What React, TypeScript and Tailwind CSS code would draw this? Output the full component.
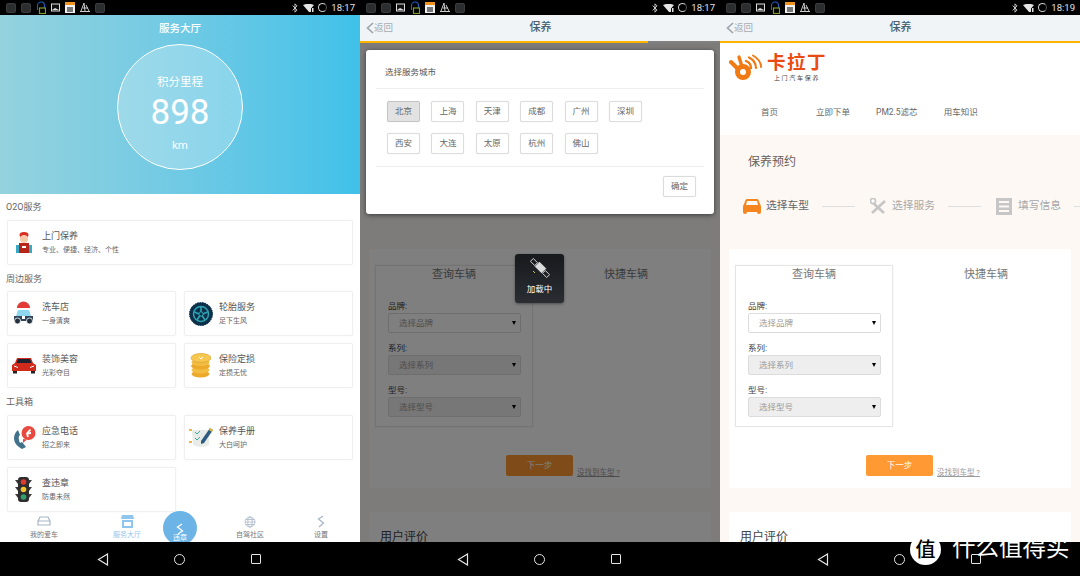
import type { ReactNode } from "react";
import { Bluetooth } from "lucide-react";

const GridApp = () => (
  <div className="w-[10px] h-[10px] rounded-[2px] bg-[#2b2d2f] border border-[#3a3c3e]" />
);

const ImageIcon = () => (
  <svg width="9" height="9" viewBox="0 0 9 9">
    <rect x="0.5" y="1" width="8" height="7" fill="#111" stroke="#ddd" />
    <path d="M1 7 L4 5 L8 7 Z" fill="#ddd" />
  </svg>
);

const LockIcon = () => (
  <svg width="10" height="13" viewBox="0 0 10 13" fill="none">
    <path d="M1.5 9 V4.5 a3.5 3.5 0 0 1 7 0 V7" stroke="#1d5fc0" strokeWidth="1.1" />
    <rect x="3.5" y="7" width="6" height="5.5" stroke="#7f9a2a" strokeWidth="1.2" />
  </svg>
);

const CalendarIcon = () => (
  <div className="w-[10px] h-[11px] bg-[#f0f0f0] border-t-[3px] border-[#f0931e] flex items-center justify-center">
    <div className="w-[6px] h-[5px] bg-[#777]" />
  </div>
);

const BoatIcon = () => (
  <svg width="10" height="11" viewBox="0 0 10 11" fill="none" stroke="#ccc" strokeWidth="1">
    <path d="M1 9 L4 1 L5 9 M6 3 L9 9 M0 9.5 H10 M3 6 H8" />
  </svg>
);

const StatusBar = ({ time, lockFirst }: { time: string; lockFirst?: boolean }) => (
  <div className="h-[15px] shrink-0 bg-black flex items-center justify-between pl-[6px] pr-[5px]">
    <div className="flex items-center gap-[5px]">
      <GridApp />
      <GridApp />
      {lockFirst ? <LockIcon /> : <ImageIcon />}
      {lockFirst ? <ImageIcon /> : <LockIcon />}
      <CalendarIcon />
      <BoatIcon />
      <GridApp />
    </div>
    <div className="flex items-center text-[#e4e4e4]">
      <Bluetooth size={10} strokeWidth={2} className="mr-[3px]" />
      <svg width="11" height="8" viewBox="0 0 11 8" className="mr-[4px]">
        <path d="M0 1 Q5.5 -1.5 11 1 L8 4.5 V8 H6 Z" fill="#e4e4e4" />
        <rect x="9" y="4" width="1.5" height="4" fill="#e4e4e4" />
      </svg>
      <div className="w-[9px] h-[9px] rounded-full border border-[#cfcfcf] border-r-[#555] mr-[4px]" />
      <span className="text-[9.5px] leading-none">{time}</span>
    </div>
  </div>
);

const NavBar = () => (
  <div className="h-[34px] shrink-0 bg-black flex items-center gap-[65px] pl-[97px]">
    <svg width="12" height="13" viewBox="0 0 12 13" fill="none" stroke="#e6e6e6" strokeWidth="1.2">
      <path d="M10.5 1 L1.5 6.5 L10.5 12 Z" />
    </svg>
    <div className="w-[11px] h-[11px] rounded-full border border-[#e6e6e6]" />
    <div className="w-[10px] h-[10px] border-[1.5px] border-[#e6e6e6] rounded-[1px] ml-px" />
  </div>
);

const Mechanic = () => (
  <svg width="18" height="24" viewBox="0 0 18 24">
    <ellipse cx="9" cy="4" rx="4.5" ry="3" fill="#d92d20" />
    <circle cx="9" cy="8" r="4" fill="#f5c8a8" />
    <path d="M1 14 H17 V22 H1 Z" fill="#38a9c4" />
    <path d="M4 12 H14 V22 H4 Z" fill="#b8231a" />
    <rect x="7" y="15" width="4" height="2" fill="#fff" />
  </svg>
);

const WashCar = () => (
  <svg width="21" height="25" viewBox="0 0 21 25">
    <path d="M4 7 a6.5 6.5 0 0 1 13 0 Z" fill="#e03b36" />
    <path d="M5 9 H16 L18 15 H3 Z" fill="#8fd6ef" />
    <path d="M1 15 H20 V20 H1 Z" fill="#33475b" />
    <circle cx="4.5" cy="20" r="3" fill="#22303f" stroke="#fff" strokeWidth="0.8" />
    <circle cx="16.5" cy="20" r="3" fill="#22303f" stroke="#fff" strokeWidth="0.8" />
    <rect x="9" y="15" width="3" height="3" fill="#fff" />
  </svg>
);

const Tire = () => (
  <svg width="24" height="24" viewBox="0 0 24 24">
    <circle cx="12" cy="12" r="11.5" fill="#0c2f4a" stroke="#0c2f4a" strokeDasharray="1.5 1" />
    <circle cx="12" cy="12" r="7.5" fill="none" stroke="#2fa5b3" strokeWidth="1.5" />
    <path d="M12 5 V10 M5.5 10 L10 12 M8 18 L11 13.5 M16 18 L13 13.5 M18.5 10 L14 12" stroke="#2fa5b3" strokeWidth="1.6" />
    <circle cx="12" cy="12" r="2.2" fill="none" stroke="#2fa5b3" />
  </svg>
);

const SportsCar = () => (
  <svg width="24" height="17" viewBox="0 0 24 17">
    <path d="M5 1 H19 L21 6 L24 8 V14 H0 V8 L3 6 Z" fill="#d02a1c" />
    <path d="M6 2 H18 L19.5 6 H4.5 Z" fill="#1d2230" />
    <rect x="1" y="14" width="4" height="2.5" fill="#222" />
    <rect x="19" y="14" width="4" height="2.5" fill="#222" />
    <path d="M2 9 L6 10.5 M22 9 L18 10.5" stroke="#fff" strokeWidth="1" />
  </svg>
);

const Coins = () => (
  <svg width="21" height="25" viewBox="0 0 21 25">
    <ellipse cx="10.5" cy="21" rx="9" ry="3.5" fill="#eda92a" />
    <ellipse cx="10.5" cy="17" rx="9" ry="3.5" fill="#f2bd42" />
    <ellipse cx="10.5" cy="13" rx="9.5" ry="3.5" fill="#eda92a" />
    <ellipse cx="10.5" cy="9.5" rx="9" ry="3.5" fill="#f2bd42" />
    <ellipse cx="11" cy="5" rx="10" ry="4.5" fill="#f6c84f" stroke="#dd9a20" strokeWidth="0.6" />
    <path d="M9 4 L11 6 L13 4" stroke="#fff" fill="none" />
  </svg>
);

const Phone = () => (
  <svg width="24" height="24" viewBox="0 0 24 24">
    <path d="M4 6 C0 12 2 19 10 23 L14 21 L10 16 L8 17 C6.5 14 6.5 11.5 7 10 L8 9 L6 4 Z" fill="#41728a" />
    <circle cx="16.5" cy="7" r="7" fill="#e84a3f" />
    <path d="M11 13 L11 17 L15 13.5 Z" fill="#e84a3f" />
    <path d="M18.5 3.5 L15 7.5 L16 11 M15 7.5 L19 7" stroke="#fff" strokeWidth="1.8" fill="none" />
  </svg>
);

const Manual = () => (
  <svg width="24" height="22" viewBox="0 0 24 22">
    <path d="M3 3 H20 V18 Q12 22 4 18 Z" fill="#e7ece8" />
    <path d="M0 3 H3 M0 15 H3" stroke="#e8b93c" strokeWidth="2" />
    <path d="M6 5 L8 7 L11 4 M6 11 L8 13 L11 10" stroke="#3aa9a0" fill="none" />
    <path d="M12 14 L21 1 L24 3 L15 16 L12 17 Z" fill="#2d5b82" />
    <path d="M21 1 L24 3 L23 5 L20 3 Z" fill="#e8b93c" />
  </svg>
);

const TrafficLight = () => (
  <svg width="17" height="25" viewBox="0 0 17 25">
    <path d="M0 3 H17 L14 7 H3 Z M0 10 H17 L14 14 H3 Z M0 17 H17 L14 21 H3 Z" fill="#3a3a3c" />
    <rect x="3" y="0" width="11" height="25" rx="3" fill="#2e2e30" />
    <circle cx="8.5" cy="5" r="2.8" fill="#e0392f" />
    <circle cx="8.5" cy="12.5" r="2.8" fill="#f4c531" />
    <circle cx="8.5" cy="20" r="2.8" fill="#2fa36a" />
  </svg>
);

const ServiceCard = ({ icon, title, desc, wide }: { icon: ReactNode; title: string; desc: string; wide?: boolean }) => (
  <div className={`${wide ? "mx-[7px]" : ""} h-[45px] bg-white border border-[#f0f0f0] rounded-[2px] shadow-[0_0_2px_rgba(0,0,0,0.06)] flex items-center`}>
    <div className="w-[31px] shrink-0 flex items-center justify-center">{icon}</div>
    <div className="ml-[3px]">
      <div className="text-[9px] leading-[13px] text-[#555]">{title}</div>
      <div className="text-[7px] leading-[10px] mt-[2px] text-[#666]">{desc}</div>
    </div>
  </div>
);

const SectionTitle = ({ children, className }: { children: ReactNode; className: string }) => (
  <div className={`px-[6px] text-[9px] leading-[14px] text-[#666] ${className}`}>{children}</div>
);

const TabItem = ({ icon, label, active, className }: { icon: ReactNode; label: string; active?: boolean; className: string }) => (
  <div className={`flex flex-col items-center ${className}`}>
    <div className="h-[15px] flex items-center justify-center">{icon}</div>
    <div className={`text-[7px] leading-[11px] mt-[1px] whitespace-nowrap ${active ? "text-[#8fc6ee]" : "text-[#777]"}`}>{label}</div>
  </div>
);

const ServiceHall = () => (
  <div className="flex-1 min-h-0 flex flex-col bg-white relative overflow-hidden">
    {/* top banner */}
    <div className="h-[179px] shrink-0 bg-gradient-to-r from-[#94d2de] to-[#3fc1e9] flex flex-col items-center text-white">
      <div className="text-[10.5px] leading-[14px] mt-[7px] font-medium">服务大厅</div>
      <div className="w-[126px] h-[126px] rounded-full border border-white bg-white/25 flex flex-col items-center mt-[8px]">
        <div className="text-[11.5px] leading-[16px] mt-[29px]">积分里程</div>
        <div className="text-[35px] leading-[40px] mt-[3px] font-['Roboto',sans-serif]">898</div>
        <div className="text-[11.5px] leading-[14px] mt-[5px]">km</div>
      </div>
    </div>

    <SectionTitle className="mt-[6px]">O2O服务</SectionTitle>
    <div className="mt-[6px]">
      <ServiceCard wide icon={<Mechanic />} title="上门保养" desc="专业、便捷、经济、个性" />
    </div>
    <SectionTitle className="mt-[7px]">周边服务</SectionTitle>
    <div className="grid grid-cols-2 gap-x-[8px] gap-y-[7px] px-[7px] mt-[5px]">
      <ServiceCard icon={<WashCar />} title="洗车店" desc="一身清爽" />
      <ServiceCard icon={<Tire />} title="轮胎服务" desc="足下生风" />
      <ServiceCard icon={<SportsCar />} title="装饰美容" desc="光彩夺目" />
      <ServiceCard icon={<Coins />} title="保险定损" desc="定损无忧" />
    </div>
    <SectionTitle className="mt-[7px]">工具箱</SectionTitle>
    <div className="grid grid-cols-2 gap-x-[8px] gap-y-[7px] px-[7px] mt-[6px]">
      <ServiceCard icon={<Phone />} title="应急电话" desc="招之即来" />
      <ServiceCard icon={<Manual />} title="保养手册" desc="大白呵护" />
      <ServiceCard icon={<TrafficLight />} title="查违章" desc="防患未然" />
    </div>

    {/* bottom tabs */}
    <div className="flex h-[29px] pt-[2px]">
      <TabItem
        className="w-[88px]"
        label="我的爱车"
        icon={
          <svg width="14" height="11" viewBox="0 0 14 11" fill="none" stroke="#a8b6c9" strokeWidth="1.2">
            <path d="M3 1 H11 L13 5 V9 H1 V5 Z M1 5 H13" />
          </svg>
        }
      />
      <TabItem
        className="w-[78px]"
        active
        label="服务大厅"
        icon={
          <svg width="13" height="13" viewBox="0 0 13 13" fill="#8fc6ee">
            <path d="M1 0 H12 L13 4 H0 Z" />
            <path d="M1 5 H12 V13 H1 Z M3 7 V11 H10 V7 Z" fillRule="evenodd" />
          </svg>
        }
      />
      <div className="w-[46px]" />
      <TabItem
        className="w-[76px]"
        label="自驾社区"
        icon={
          <svg width="12" height="12" viewBox="0 0 12 12" fill="none" stroke="#a8b6c9" strokeWidth="0.8">
            <circle cx="6" cy="6" r="5" />
            <ellipse cx="6" cy="6" rx="2.2" ry="5" />
            <path d="M1 6 H11 M1.8 3.5 H10.2 M1.8 8.5 H10.2" />
          </svg>
        }
      />
      <TabItem
        className="w-[66px]"
        label="设置"
        icon={
          <svg width="8" height="13" viewBox="0 0 8 13" fill="none" stroke="#a8b6c9" strokeWidth="1.3">
            <path d="M6 1 L1.5 4 L6.5 8 L2 12" />
          </svg>
        }
      />
    </div>

    {/* round button sits over the tab bar */}
    <div className="absolute left-[163px] top-[496px] w-[34px] h-[34px] rounded-full bg-[#6cb3e6] flex flex-col items-center text-white">
      <svg width="8" height="12" viewBox="0 0 8 12" fill="none" stroke="#fff" strokeWidth="1.3" className="mt-[12px]">
        <path d="M6 1 L1.5 4 L6.5 8 L2 11" />
      </svg>
      <div className="text-[7px] leading-[9px] -mt-[1px]">违章</div>
    </div>
  </div>
);

const Header = ({ progress }: { progress: boolean }) => (
  <div className="shrink-0">
    <div className="h-[26px] bg-[#f0f4f7] flex items-center">
      <svg width="8" height="12" viewBox="0 0 8 12" fill="none" stroke="#9aa3ab" strokeWidth="1.6" className="ml-[6px]">
        <path d="M7 1 L1.5 6 L7 11" />
      </svg>
      <span className="text-[9.5px] text-[#a6acb2]">返回</span>
      <span className="flex-1 text-center text-[11px] font-medium text-[#46606f] pr-[32px]">保养</span>
    </div>
    <div className={`h-[2px] ${progress ? "bg-[#808080]" : "bg-white"}`}>
      <div className={`h-[2px] bg-[#ffb400] ${progress ? "w-[288px]" : "w-full"}`} />
    </div>
  </div>
);

const Step = ({ icon, label, active }: { icon: ReactNode; label: string; active?: boolean }) => (
  <div className="flex items-center shrink-0">
    <div className="w-[18px] flex justify-center">{icon}</div>
    <span className={`ml-[5px] text-[10.75px] ${active ? "text-[#666]" : "text-[#a8a8a8]"}`}>{label}</span>
  </div>
);

const StepLine = () => <div className="w-[33px] h-px bg-[#dedede] shrink-0 ml-[13px] mr-[14px]" />;

const CarSelect = ({ label, placeholder, disabled, className }: { label: string; placeholder: string; disabled?: boolean; className: string }) => (
  <div className={className}>
    <div className="text-[8.5px] leading-[10px] text-[#444]">{label}</div>
    <div className={`mt-[2px] h-[20px] w-[133px] rounded-[2px] border border-[#dcdcdc] flex items-center justify-between pl-[10px] pr-[4px] ${disabled ? "bg-[#eeeeee]" : "bg-white"}`}>
      <span className="text-[8.5px] text-[#9a9a9a]">{placeholder}</span>
      <span className="w-0 h-0 border-x-[2px] border-x-transparent border-t-[4px] border-t-black" />
    </div>
  </div>
);

const KarLogo = () => (
  <div className="flex items-start">
    <svg width="33" height="27" viewBox="0 0 33 27" fill="none" stroke="#f07a13" strokeLinecap="round">
      <circle cx="14" cy="18" r="5.5" strokeWidth="5" />
      <path d="M2 8 L9 15" strokeWidth="4" />
      <path d="M10 3 L12.5 11" strokeWidth="3.4" />
      <path d="M17 7 Q22 9 22 14" strokeWidth="2.4" />
      <path d="M20 3.5 Q27 7 27 14" strokeWidth="2.2" />
      <path d="M24 1.5 Q32 6 32 13" strokeWidth="2" />
    </svg>
    <div className="ml-[5px] flex flex-col items-center">
      <div className="text-[18.5px] leading-[19px] font-bold tracking-[1.5px] text-[#ea4b12]">卡拉丁</div>
      <div className="text-[6px] leading-[8px] mt-[1px] tracking-[1.7px] text-[#444]">上门汽车保养</div>
    </div>
  </div>
);

// covered: the top of the page lies behind the city dialog, so its texts are not drawn
const BookingPage = ({ covered }: { covered?: boolean }) => (
  <div className="h-[500px] overflow-hidden bg-[#fdf8f4]">
    <div className={`h-[92px] bg-white ${covered ? "invisible" : ""}`}>
      <div className="pt-[11px] pl-[9px] h-[54px]">
        <KarLogo />
      </div>
      <div className="flex text-[8.5px] text-[#666] leading-[12px] mt-[9px]">
        <span className="ml-[41px]">首页</span>
        <span className="ml-[38px]">立即下单</span>
        <span className="ml-[26px]">PM2.5滤芯</span>
        <span className="ml-[26px]">用车知识</span>
      </div>
    </div>
    <div className={`pl-[28px] pt-[18px] text-[12px] leading-[18px] text-[#6b5f58] ${covered ? "invisible" : ""}`}>保养预约</div>
    <div className={`flex items-center pl-[23px] mt-[26px] h-[18px] overflow-hidden ${covered ? "invisible" : ""}`}>
      <Step
        active
        label="选择车型"
        icon={
          <svg width="18" height="15" viewBox="0 0 18 15" fill="#f5861f">
            <path d="M4 0 H14 Q15 0 15.5 1 L17 5 Q18 6 18 8 V13 Q18 15 16 15 Q14 15 14 13 H4 Q4 15 2 15 Q0 15 0 13 V8 Q0 6 1 5 L2.5 1 Q3 0 4 0 Z M4 2 L3 6 H15 L14 2 Z" fillRule="evenodd" />
          </svg>
        }
      />
      <StepLine />
      <Step
        label="选择服务"
        icon={
          <svg width="17" height="17" viewBox="0 0 17 17" fill="none" stroke="#c6c6c6">
            <path d="M2 15 L15 3 M1 3 L14 15" strokeWidth="2.6" />
            <circle cx="3" cy="3" r="2.5" fill="#fff" strokeWidth="1.6" />
          </svg>
        }
      />
      <StepLine />
      <Step
        label="填写信息"
        icon={
          <svg width="16" height="17" viewBox="0 0 16 17">
            <path d="M0 0 H16 V17 H0 Z M3 3 V5 H13 V3 Z M3 7.5 V9.5 H13 V7.5 Z M3 12 V14 H13 V12 Z" fill="#c6c6c6" fillRule="evenodd" />
          </svg>
        }
      />
      <StepLine />
    </div>

    <div className="mx-[9px] mt-[34px] h-[239px] bg-white pt-[16px] pl-[6px]">
      <div className="flex items-start">
        <div className="w-[158px] h-[162px] border border-[#e6e6e6] shadow-[0_0_1px_rgba(0,0,0,0.1)] pl-[12px]">
          <div className="text-[11px] leading-[16px] mt-px text-[#777] text-center pr-[12px]">查询车辆</div>
          <CarSelect className="mt-[18px]" label="品牌:" placeholder="选择品牌" />
          <CarSelect className="mt-[10px]" label="系列:" placeholder="选择系列" disabled />
          <CarSelect className="mt-[10px]" label="型号:" placeholder="选择型号" disabled />
        </div>
        <div className="flex-1 text-center text-[11px] leading-[16px] text-[#777] pl-[8px] pt-[2px]">快捷车辆</div>
      </div>
      <div className="flex items-end mt-[28px] pl-[131px]">
        <div className="w-[67px] h-[21px] rounded-[2px] bg-[#ff9933] text-white text-[8.5px] flex items-center justify-center">下一步</div>
        <span className="ml-[4px] -mb-[2px] text-[7.5px] leading-[10px] text-[#999] underline">没找到车型 ?</span>
      </div>
    </div>

    <div className="mx-[9px] mt-[24px] h-[60px] bg-white pl-[11px] pt-[16px] text-[12px] leading-[18px] text-[#444]">用户评价</div>
  </div>
);

const CityBtn = ({ name, selected }: { name: string; selected?: boolean }) => (
  <div className={`w-[33px] h-[21px] rounded-[2px] border flex items-center justify-center text-[8.5px] text-[#666] shadow-[0_0_1px_rgba(0,0,0,0.15)] ${selected ? "bg-[#e2e2e2] border-[#c4c4c4]" : "bg-white border-[#dcdcdc]"}`}>
    {name}
  </div>
);

const CityModal = () => (
  <div className="absolute left-[6px] top-[7px] w-[348px] h-[164px] bg-white rounded-[3px] shadow-[0_1px_5px_rgba(0,0,0,0.55)]">
    <div className="mx-[10px] h-[39px] pt-[7px] border-b border-[#eeeeee] pl-[9px] flex items-center text-[8.5px] text-[#555]">选择服务城市</div>
    <div className="grid grid-cols-[repeat(6,33px)] content-start gap-x-[11.4px] gap-y-[11px] pl-[21px] pt-[12px] h-[77px]">
      {["北京", "上海", "天津", "成都", "广州", "深圳", "西安", "大连", "太原", "杭州", "佛山"].map((c, i) => (
        <CityBtn key={c} name={c} selected={i === 0} />
      ))}
    </div>
    <div className="mx-[10px] border-t border-[#eeeeee] flex justify-end pt-[9px] pr-[8px]">
      <CityBtn name="确定" />
    </div>
  </div>
);

const LoadingToast = () => (
  <div className="absolute left-[155px] top-[211px] w-[49px] h-[49px] rounded-[3px] bg-gradient-to-b from-[#17191d] to-[#2a2e33] shadow-[0_1px_3px_rgba(0,0,0,0.4)] flex flex-col items-center">
    <svg width="20" height="21" viewBox="0 0 20 21" fill="none" stroke="#dcdcdc" strokeWidth="0.9" className="mt-[4px]">
      <rect x="1" y="2" width="6" height="4" transform="rotate(45 4 4)" />
      <rect x="6" y="6.5" width="9" height="6" transform="rotate(45 10.5 9.5)" fill="#dcdcdc" />
      <rect x="13" y="14" width="6" height="4" transform="rotate(45 16 16)" />
      <path d="M3 13 L5 15" stroke="#c8c832" strokeWidth="1" />
    </svg>
    <div className="text-[8.5px] leading-[12px] text-white mt-[4px]">加载中</div>
  </div>
);

const Screen = ({ children, time, lockFirst }: { children: ReactNode; time: string; lockFirst?: boolean }) => (
  <div className="w-[360px] h-[576px] shrink-0 flex flex-col overflow-hidden">
    <StatusBar time={time} lockFirst={lockFirst} />
    {children}
    <NavBar />
  </div>
);

export default function App() {
  return (
    <div className="w-[1080px] h-[576px] flex relative overflow-hidden bg-black font-['Roboto','Noto_Sans_CJK_SC',sans-serif]">
      <Screen time="18:17" lockFirst>
        <ServiceHall />
      </Screen>

      <Screen time="18:17">
        <Header progress />
        <div className="flex-1 min-h-0 relative overflow-hidden">
          <BookingPage covered />
          <div className="absolute inset-0 bg-black/50" />
          <CityModal />
          <LoadingToast />
        </div>
      </Screen>

      <Screen time="18:19">
        <Header progress={false} />
        <div className="flex-1 min-h-0 overflow-hidden">
          <BookingPage />
        </div>
      </Screen>

      {/* watermark over the bottom right corner */}
      <div className="absolute left-[910px] top-[534px] flex items-center text-white">
        <div className="w-[31px] h-[31px] rounded-full bg-white text-black text-[20px] font-medium flex items-center justify-center">值</div>
        <div className="ml-[11px] text-[23.5px] leading-[30px] -mt-[3px]">什么值得买</div>
      </div>
    </div>
  );
}
